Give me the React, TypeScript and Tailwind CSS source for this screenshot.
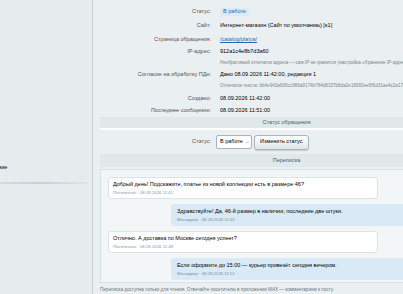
import React from 'react';

type Msg = { from: 'visitor' | 'manager'; text: string; meta: string };

const messages: Msg[] = [
  { from: 'visitor', text: 'Добрый день! Подскажите, платье из новой коллекции есть в размере 46?', meta: 'Посетитель · 08.09.2026 11:42' },
  { from: 'manager', text: 'Здравствуйте! Да, 46-й размер в наличии, последние две штуки.', meta: 'Менеджер · 08.09.2026 11:45' },
  { from: 'visitor', text: 'Отлично. А доставка по Москве сегодня успеет?', meta: 'Посетитель · 08.09.2026 11:48' },
  { from: 'manager', text: 'Если оформите до 15:00 — курьер привезёт сегодня вечером.', meta: 'Менеджер · 08.09.2026 11:51' },
];

function Row({ label, children, h = 'h-[12px]', sub }: { label: string; children: React.ReactNode; h?: string; sub?: string }) {
  return (
    <>
      <div className={`grid grid-cols-[118px_1fr] gap-x-[9px] items-center ${h}`}>
        <div className="text-right text-[#555]">{label}</div>
        <div className="whitespace-nowrap text-black">{children}</div>
      </div>
      {sub && (
        <div className="grid grid-cols-[118px_1fr] gap-x-[9px] items-center h-[11px]">
          <div />
          <div className="whitespace-nowrap text-[4.6px] text-[#7a878c]">{sub}</div>
        </div>
      )}
    </>
  );
}

export default function App() {
  return (
    <div
      className="w-[403px] h-[294px] overflow-hidden flex bg-[#eaeff1] text-[5.5px] leading-none"
      style={{ fontFamily: '"Liberation Sans", Arial, sans-serif' }}
    >
      {/* sidebar, cut off on the left */}
      <div className="w-[93px] shrink-0 bg-[#e6ecee] border-r border-[#c9d2d5] overflow-hidden">
        <div className="pt-[45px] -ml-[40px] text-black whitespace-nowrap">
          <div className="h-[14px]">Обращения</div>
          <div className="h-[12px] -ml-[4px]">Чаты и шаблоны</div>
        </div>
        <div className="mt-[94px] -ml-[30px] whitespace-nowrap text-black">Расположение</div>
        <div className="mt-[11px] mr-[4px] h-[2px] bg-gradient-to-r from-[#d4dbde] via-[#c8d0d3] to-[#e0e6e8]" />
      </div>

      <div className="flex-1 min-w-0 overflow-hidden">
        <div className="w-[380px] pt-[6px]">
          <Row label="Статус:">
            <span className="inline-block px-[3px] py-[1.5px] rounded-[2px] bg-[#dde9f3] text-[#2a6ab0]">В работе</span>
          </Row>
          <div className="h-[2px]" />
          <Row label="Сайт:">Интернет-магазин (Сайт по умолчанию) [s1]</Row>
          <div className="h-[2px]" />
          <Row label="Страница обращения:">
            <span className="text-[#2a6ab0] underline">/catalog/platya/</span>
          </Row>
          <Row
            label="IP-адрес:"
            sub="Необратимый отпечаток адреса — сам IP не хранится (настройка «Хранение IP-адресов» выключена)"
          >
            912a1c4e8b7d3a60
          </Row>
          <Row
            label="Согласие на обработку ПДн:"
            sub="Отпечаток текста: bb4e943a906cc966a9174b784d8337b8da2e18093ee5f6d31ae4c2a17f0b9e55"
          >
            Дано 08.09.2026 11:42:00, редакция 1
          </Row>
          <div className="h-[1px]" />
          <Row label="Создано:">08.09.2026 11:42:00</Row>
          <Row label="Последнее сообщение:">08.09.2026 11:51:00</Row>

          <div className="ml-[7px]">
            <div className="h-[13px] bg-[#e0e8ea] flex items-center justify-center text-[#4b6267] border-b-[2px] border-white">
              Статус обращения
            </div>

            <div className="h-[24px] grid grid-cols-[111px_1fr] gap-x-[5px] items-center">
              <div className="text-right text-[#555]">Статус:</div>
              <div className="flex items-center gap-[2px]">
                <div className="h-[14px] w-[36px] bg-white border border-[#a7b4b8] rounded-[2px] flex items-center gap-[3px] pl-[3px] pr-[2px] text-black whitespace-nowrap">
                  <span>В работе</span>
                  <svg width="4" height="3" viewBox="0 0 10 8" fill="none" stroke="#666" strokeWidth="1.4">
                    <path d="M1 2l4 4 4-4" />
                  </svg>
                </div>
                <button className="h-[15px] px-[5px] rounded-[3px] border border-[#a9b6ba] bg-gradient-to-b from-white to-[#dfe6e8] shadow-[0_1px_1px_rgba(0,0,0,0.15)] text-black whitespace-nowrap">
                  Изменить статус
                </button>
              </div>
            </div>

            <div className="h-[13px] bg-[#e0e8ea] flex items-center justify-center text-[#4b6267]">Переписка</div>

            <div className="h-[114px] mt-[2px] bg-[#f3f6f7] border border-[#d8e1e4] px-[7px] pt-[7px] flex flex-col gap-[5px]">
              {messages.map((m, i) =>
                m.from === 'visitor' ? (
                  <div key={i} className="w-[270px] bg-white border border-[#dbe3e6] rounded-[3px] px-[4px] pt-[3px] pb-[2px]">
                    <div className="leading-[7px] text-black whitespace-nowrap">{m.text}</div>
                    <div className="mt-[2px] leading-[6px] text-[4.3px] text-[#8a969b]">{m.meta}</div>
                  </div>
                ) : (
                  <div key={i} className="w-[300px] ml-[63px] bg-[#dae9f6] rounded-[3px] px-[6px] pt-[4px] pb-[3px]">
                    <div className="leading-[7px] text-black whitespace-nowrap">{m.text}</div>
                    <div className="mt-[2px] leading-[6px] text-[4.3px] text-[#7d8c94]">{m.meta}</div>
                  </div>
                )
              )}
            </div>

            <div className="pt-[3px] text-[4.6px] leading-[8px] text-[#66767c] whitespace-nowrap">
              Переписка доступна только для чтения. Отвечайте посетителю в приложении MAX — комментарием к посту.
              <br />
              Сообщения синхронизируются автоматически.
            </div>
          </div>
        </div>
      </div>
    </div>
  );
}
